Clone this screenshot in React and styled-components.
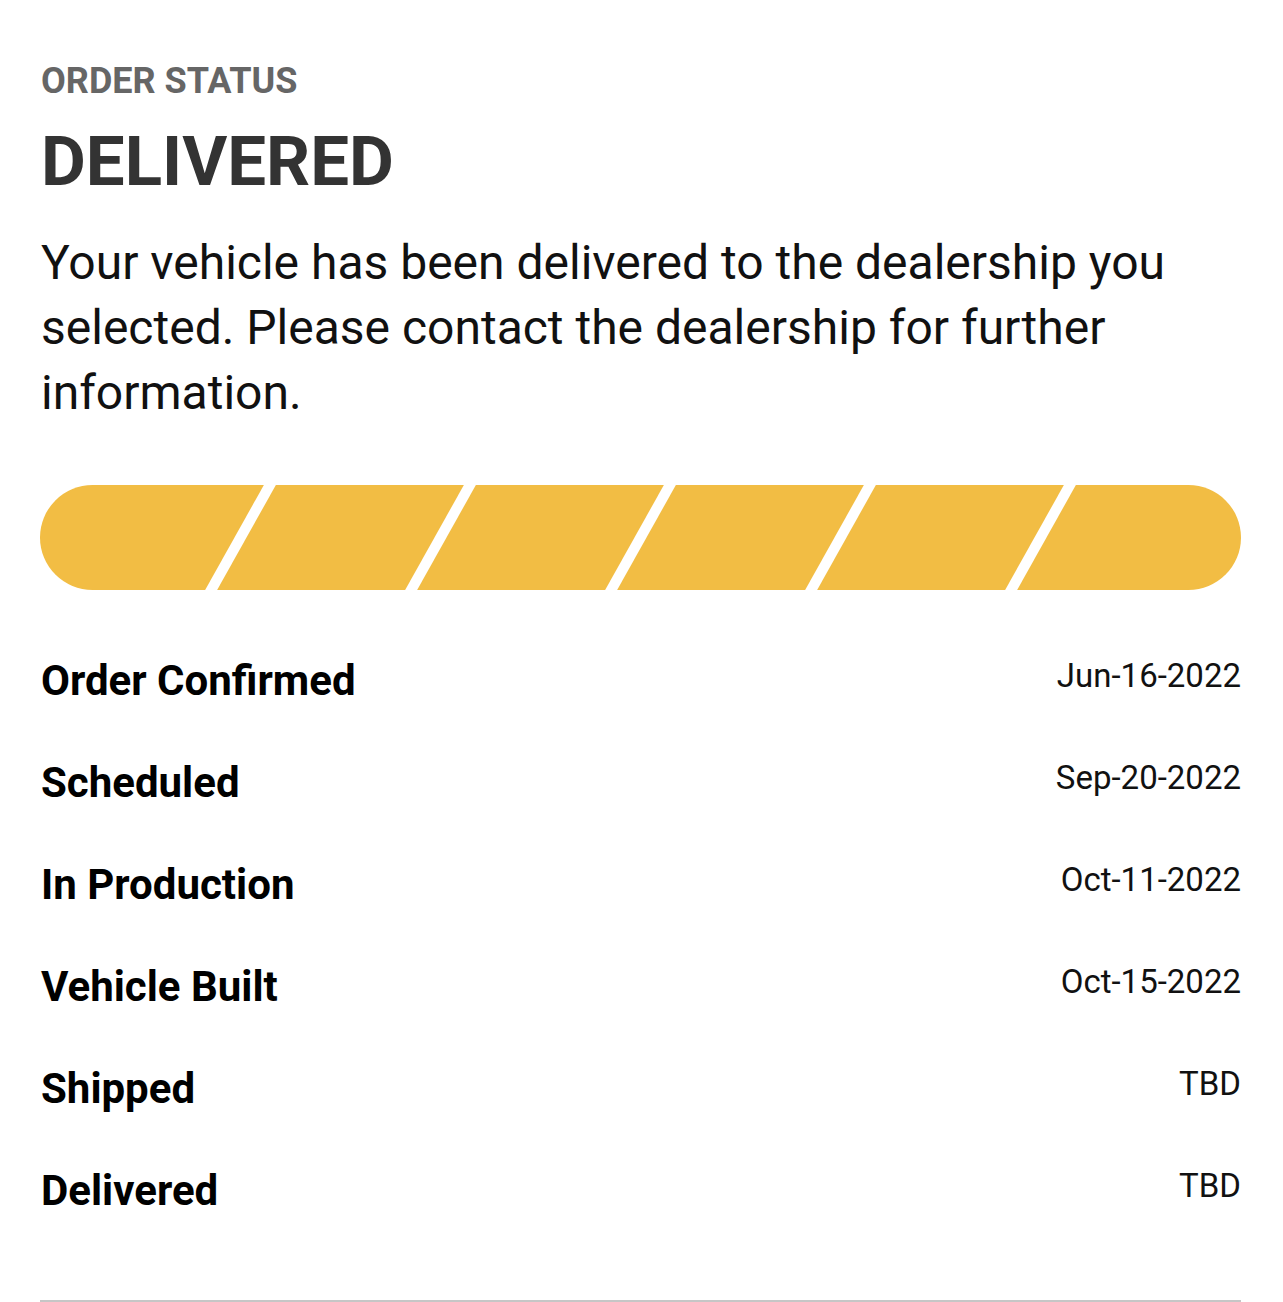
import React from 'react'
import styled, { createGlobalStyle } from 'styled-components'

const GlobalStyle = createGlobalStyle`
  body {
    margin: 0;
    background: #fff;
    font-family: Roboto, "Liberation Sans", sans-serif;
  }
`

const Page = styled.div`
  padding: 61px 42px 0 40px;
`

const Eyebrow = styled.div`
  font-size: 36px;
  line-height: 40px;
  font-weight: 700;
  color: #666;
  padding-left: 1px;
`

const Status = styled.h1`
  margin: 21px 0 0;
  font-size: 69px;
  line-height: 80px;
  font-weight: 700;
  color: #333;
  padding-left: 1px;
`

const Message = styled.p`
  margin: 28px 0 0;
  padding-left: 1px;
  font-size: 48px;
  line-height: 65px;
  font-weight: 400;
  color: #111;
`

const Bar = styled.svg`
  display: block;
  margin-top: 60px;
  width: 1201px;
  height: 105px;
`

const Steps = styled.ul`
  list-style: none;
  margin: 66px 0 0;
  padding: 0 0 0 1px;
`

const Step = styled.li`
  display: flex;
  justify-content: space-between;
  align-items: flex-start;
  height: 102px;
`

const StepName = styled.span`
  font-size: 42px;
  line-height: 50px;
  font-weight: 700;
  color: #000;
`

const StepDate = styled.span`
  font-size: 33px;
  line-height: 40px;
  color: #111;
`

const Divider = styled.hr`
  margin: 32px 0 0;
  border: 0;
  border-top: 2px solid #c6c6c6;
`

const steps = [
  ['Order Confirmed', 'Jun-16-2022'],
  ['Scheduled', 'Sep-20-2022'],
  ['In Production', 'Oct-11-2022'],
  ['Vehicle Built', 'Oct-15-2022'],
  ['Shipped', 'TBD'],
  ['Delivered', 'TBD'],
]

function ProgressBar({ segments = 6 }) {
  const w = 1201
  const h = 105
  const gaps = []
  for (let i = 1; i < segments; i++) {
    const x = 225 + (i - 1) * 200
    gaps.push(
      <polygon key={i} points={`${x},-2 ${x + 12},-2 ${x - 49},${h + 2} ${x - 61},${h + 2}`} fill="#fff" />
    )
  }
  return (
    <Bar viewBox={`0 0 ${w} ${h}`}>
      <rect x="0" y="0" width={w} height={h} rx={h / 2} fill="#F2BD44" />
      {gaps}
    </Bar>
  )
}

export default function App() {
  return (
    <Page>
      <GlobalStyle />
      <Eyebrow>ORDER STATUS</Eyebrow>
      <Status>DELIVERED</Status>
      <Message>
        Your vehicle has been delivered to the dealership you selected. Please contact the dealership for further
        information.
      </Message>
      <ProgressBar />
      <Steps>
        {steps.map(([name, date]) => (
          <Step key={name}>
            <StepName>{name}</StepName>
            <StepDate>{date}</StepDate>
          </Step>
        ))}
      </Steps>
      <Divider />
    </Page>
  )
}
